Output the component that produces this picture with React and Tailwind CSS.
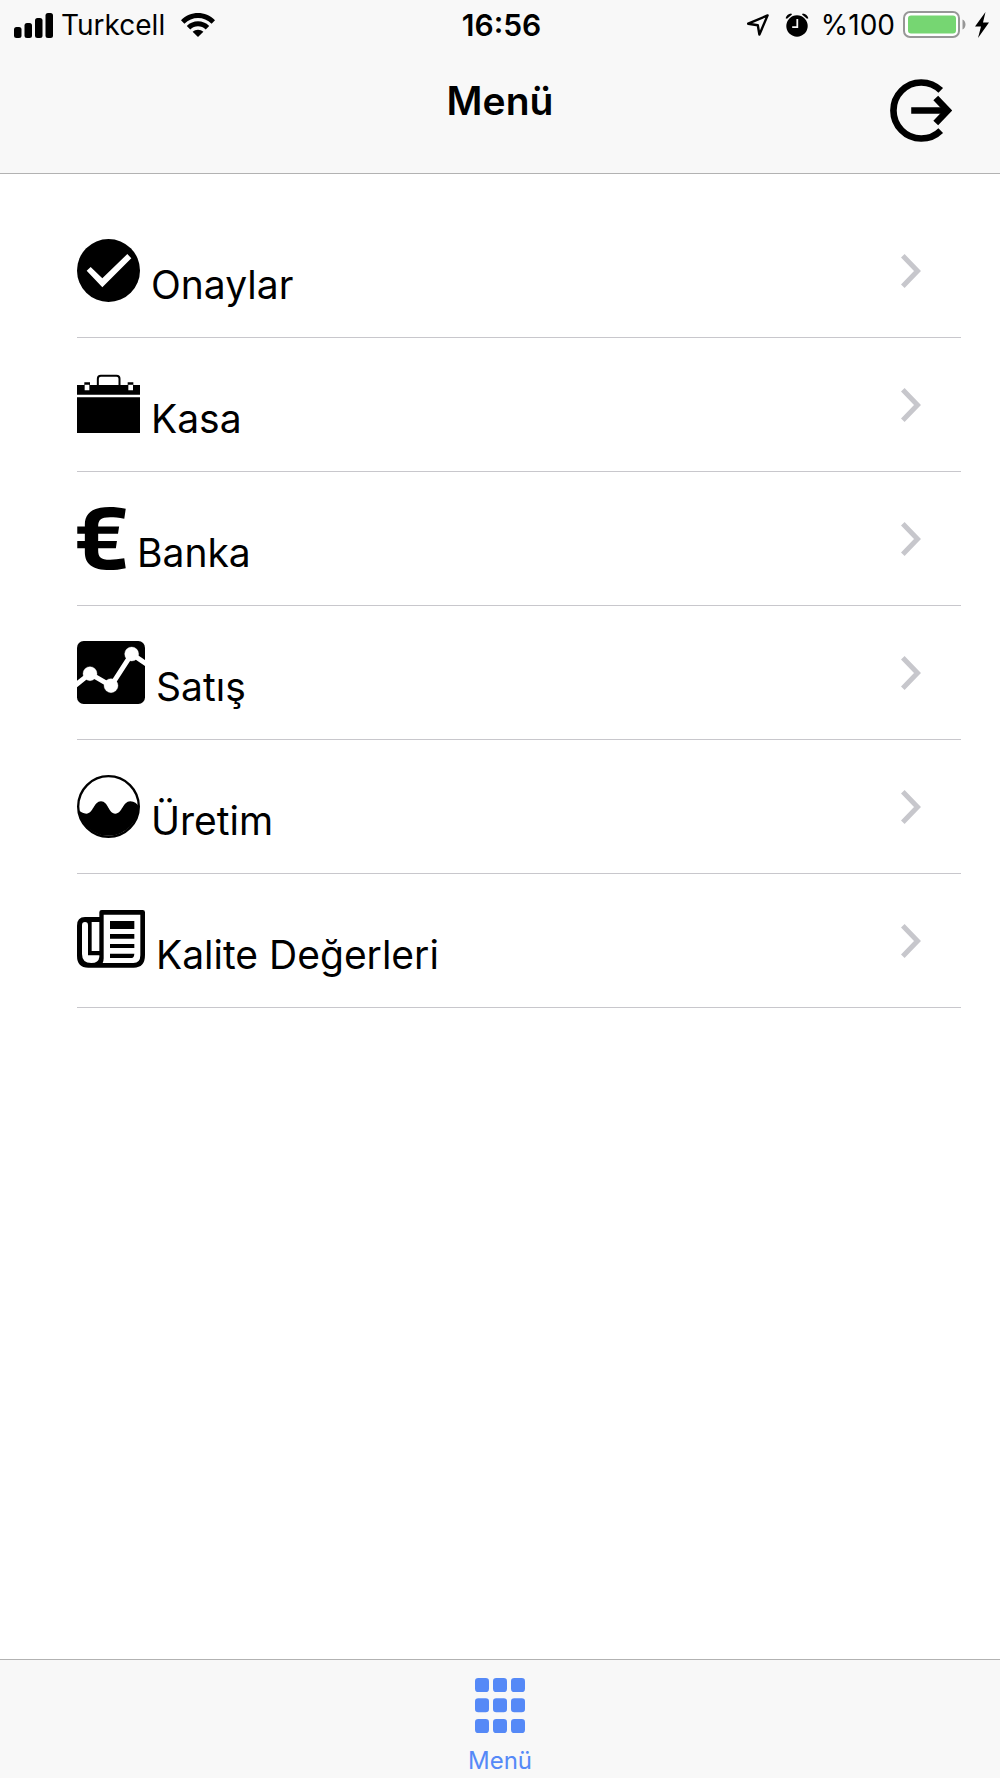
import { IoLogoEuro } from 'react-icons/io';

function SignalIcon() {
  return (
    <svg viewBox="0 0 39 25" className="h-[25px] w-[39px]" aria-hidden="true">
      <rect x="0" y="14" width="7.500" height="11" rx="2.500" />
      <rect x="10.500" y="10" width="7.500" height="15" rx="2.500" />
      <rect x="21" y="5" width="7.500" height="20" rx="2.500" />
      <rect x="31.500" y="0" width="7.500" height="25" rx="2.500" />
    </svg>
  );
}

function WifiIcon() {
  return (
    <svg viewBox="0 0 34 24" className="h-6 w-[34px]" aria-hidden="true">
      <path d="M0 7.200C9.500-2.400 24.500-2.400 34 7.200l-3.400 3.500C23 3.200 11 3.200 3.400 10.700z" />
      <path d="M5.800 13c6.300-6.200 16.100-6.200 22.400 0l-3.500 3.500c-4.300-4.200-11.100-4.200-15.400 0z" />
      <path d="M11.600 18.800c3-2.900 7.800-2.900 10.800 0L17 24z" />
    </svg>
  );
}

function LocationIcon() {
  return (
    <svg viewBox="0 0 22 22" className="h-[22px] w-[22px]" fill="none" stroke="currentColor" strokeWidth="2.400" strokeLinejoin="round" aria-hidden="true">
      <path d="M20.600 1.400 1.200 9.700l9.600 1.500 1.600 9.400z" />
    </svg>
  );
}

function AlarmIcon() {
  return (
    <svg viewBox="0 0 24 24" className="h-6 w-6" aria-hidden="true">
      <circle cx="12" cy="13" r="10.700" />
      <path d="M.600 5.200C1.300 2.400 3.200.600 6.200.400L7 1.600 2 5.800zM23.400 5.200c-.700-2.800-2.600-4.600-5.600-4.800L17 1.600l5 4.200z" />
      <path d="M12.300 6v8.200H7.200" fill="none" stroke="#f8f8f8" strokeWidth="1.800" />
    </svg>
  );
}

function BatteryIcon() {
  return (
    <svg viewBox="0 0 64 28" className="h-7 w-16" aria-hidden="true">
      <rect x="1" y="1" width="55" height="25" rx="6" fill="#fff" stroke="#979797" strokeWidth="2" />
      <rect x="5" y="4.500" width="48" height="18" rx="3" fill="#76d672" />
      <path d="M59.500 8.500c4 1.500 4 8.500 0 10z" fill="#979797" />
    </svg>
  );
}

function BoltIcon() {
  return (
    <svg viewBox="0 0 14 26" className="h-[26px] w-[14px]" aria-hidden="true">
      <path d="M10.500 0 0 14.500h6L3 26l11-15.500H8z" />
    </svg>
  );
}

function LogoutIcon() {
  return (
    <svg viewBox="0 0 187 189" className="h-[63px] w-[62px]" fill="none" stroke="currentColor" strokeWidth="20" aria-hidden="true">
      <path d="M153 34A84 84.500 0 1 0 153 155" />
      <path d="M64 94.500h108" />
      <path d="M138 57l36 37.500-36 37.500" />
    </svg>
  );
}

function CheckIcon() {
  return (
    <svg viewBox="0 0 189 189" className="h-[63px] w-[63px]" aria-hidden="true">
      <circle cx="94.500" cy="94.500" r="94.500" />
      <path d="M29 95l12-11 35 34 75-73 12 13-87 87z" fill="#fff" />
    </svg>
  );
}

function BriefcaseIcon() {
  return (
    <svg viewBox="0 0 189 189" className="h-[63px] w-[63px]" aria-hidden="true">
      <path d="M62.500 37V17q0-9 9-9h47q9 0 9 9v20" fill="none" stroke="currentColor" strokeWidth="6" />
      <path d="M0 36h189v29H0zM0 73h189v107H0z" />
      <path d="M22 28h17v8H22zM152 28h17v8h-17z" />
      <path d="M23 35h14v17H23zM154 35h14v17h-14z" fill="#fff" />
    </svg>
  );
}

function EuroIcon() {
  return <IoLogoEuro viewBox="96 48 320 416" className="h-[63px] w-[49px]" aria-hidden="true" />;
}

function AnalyticsIcon() {
  return (
    <svg viewBox="0 0 204 189" className="h-[63px] w-[68px]" aria-hidden="true">
      <rect width="204" height="189" rx="20" />
      <g fill="#fff" stroke="#fff">
        <path d="M-5 133 39 98l63 37 62-96 46 31" fill="none" strokeWidth="15" />
        <circle cx="39" cy="98" r="21" />
        <circle cx="102" cy="134" r="21" />
        <circle cx="164" cy="39" r="21" />
      </g>
    </svg>
  );
}

function WaterIcon() {
  return (
    <svg viewBox="0 0 189 189" className="h-[63px] w-[63px]" aria-hidden="true">
      <circle cx="94.500" cy="94.500" r="91" fill="none" stroke="currentColor" strokeWidth="7" />
      <path d="M3 103c8 9 16 13 25 13 21 0 22-37 44-37s22 37 43 37 22-37 45-37c12 0 20 7 26 16a92 92 0 0 1-183 8z" />
    </svg>
  );
}

function PaperIcon() {
  return (
    <svg viewBox="0 0 204 189" className="h-[63px] w-[68px]" aria-hidden="true">
      <path d="M74 3h123q7 0 7 7v128q0 38-34 38H34Q0 176 0 140V50Q0 24 24 24h43V10q0-7 7-7z" />
      <g fill="#fff">
        <path d="M80 17h110v122q0 23-21 23H77q3-7 3-14z" />
        <path d="M44 39h23v87H44z" />
        <path d="M24 39q9 0 9 10v90h34v5q-2 18-24 18-28 0-28-27V49q0-10 9-10z" />
      </g>
      <path d="M99 36h73v24H99zM99 75h73v14H99zM99 105h73v12H99zM99 134h73q-1 13-8 13H99z" />
    </svg>
  );
}

function ChevronIcon() {
  return (
    <svg viewBox="0 0 20 34" className="h-[34px] w-5" fill="none" stroke="#c7c7cc" strokeWidth="5" aria-hidden="true">
      <path d="M1.800 1.800 16.500 17 1.800 32.200" />
    </svg>
  );
}

const menuItems = [
  { label: 'Onaylar', Icon: CheckIcon },
  { label: 'Kasa', Icon: BriefcaseIcon },
  { label: 'Banka', Icon: EuroIcon },
  { label: 'Satış', Icon: AnalyticsIcon },
  { label: 'Üretim', Icon: WaterIcon },
  { label: 'Kalite Değerleri', Icon: PaperIcon },
];

export default function App() {
  return (
    <div className="flex min-h-screen flex-col bg-white font-[Inter,sans-serif] text-black">
      <header className="border-b border-[#b2b2b2] bg-[#f8f8f8]">
        {/* Status bar */}
        <div className="grid h-[50px] grid-cols-[1fr_auto_1fr] items-center pr-[11px] pl-[14px] text-[28px] leading-8">
          <div className="flex items-center gap-2">
            <SignalIcon />
            <span>Turkcell</span>
            <span className="pl-2"><WifiIcon /></span>
          </div>
          <div className="text-[30px] font-semibold">16:56</div>
          <div className="flex items-center justify-end gap-2">
            <LocationIcon />
            <span className="pr-1 pl-2"><AlarmIcon /></span>
            <span>%100</span>
            <BatteryIcon />
            <BoltIcon />
          </div>
        </div>

        {/* Title bar */}
        <div className="grid h-[123px] grid-cols-[1fr_auto_1fr] items-start px-12 pt-[29px]">
          <h1 className="col-start-2 text-[39px] leading-[44px] font-semibold">Menü</h1>
          <button type="button" aria-label="Çıkış" className="justify-self-end">
            <LogoutIcon />
          </button>
        </div>
      </header>

      <main className="flex-1 pt-[30px] pr-[39px] pl-[77px]">
        <ul>
          {menuItems.map(({ label, Icon }) => (
            <li key={label} className="border-b border-[#c8c7cc]">
              <a href="#" className="flex h-[133px] items-center justify-between pr-10">
                <span className="flex items-end gap-[11px]">
                  <Icon />
                  <span className="text-[39px] leading-[34px]">{label}</span>
                </span>
                <ChevronIcon />
              </a>
            </li>
          ))}
        </ul>
      </main>

      <nav className="flex h-[119px] justify-center border-t border-[#b2b2b2] bg-[#f8f8f8] pt-[18px]">
        <a href="#" className="flex flex-col items-center gap-3 text-[#5589f7]">
          <svg viewBox="0 0 150 165" className="h-[55px] w-[50px]" fill="currentColor" aria-hidden="true">
            {[0, 61, 123].map((y) =>
              [0, 54, 108].map((x) => <rect key={`${x}-${y}`} x={x} y={y} width="42" height="42" rx="10" />)
            )}
          </svg>
          <span className="text-2xl leading-8">Menü</span>
        </a>
      </nav>
    </div>
  );
}
